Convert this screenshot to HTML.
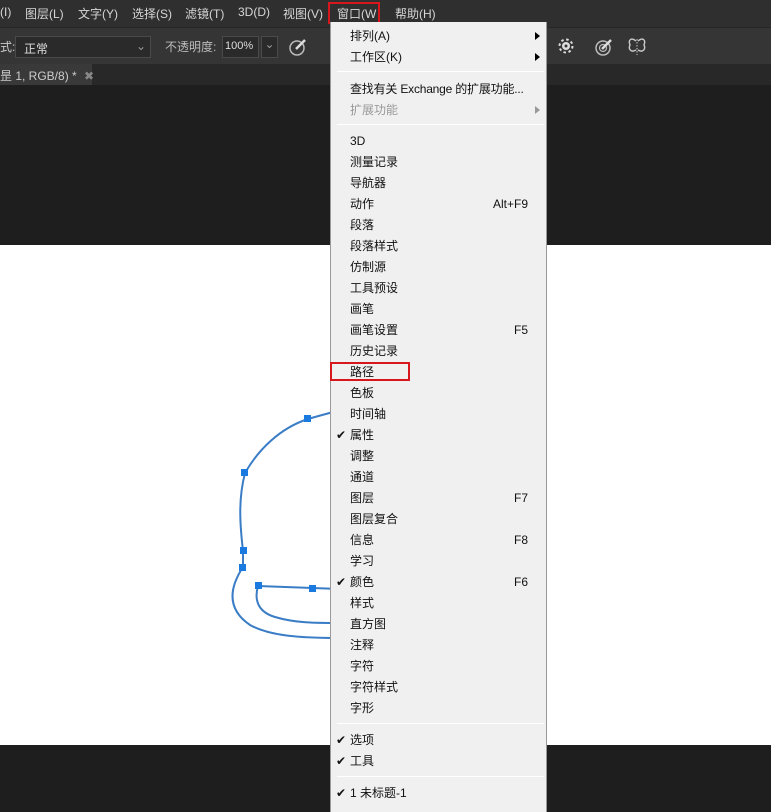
<!DOCTYPE html>
<html><head><meta charset="utf-8"><style>
*{margin:0;padding:0;box-sizing:border-box}
body{width:771px;height:806px;overflow:hidden;background:#1e1e1e;font-family:"Liberation Sans","Noto Sans CJK SC",sans-serif;font-size:12px;position:relative}
.a{position:absolute;white-space:nowrap}
.mb{left:0;top:0;width:771px;height:27px;background:#2f2f2f}
.mb span{position:absolute;top:5px;color:#d6d6d6;font-size:12px}
.tb{left:0;top:27px;width:771px;height:37px;background:#353535;border-top:1px solid #262626}
.tr{left:0;top:64px;width:771px;height:21px;background:#282828}
.menu{left:330px;top:22px;width:217px;height:790px;background:#f0f0f0;border-left:1px solid #999;border-right:1px solid #999}
.it{position:absolute;left:19px;height:21px;line-height:21px;color:#111;font-size:12px}
.sc{position:absolute;right:18px;height:21px;line-height:21px;color:#111;font-size:12px}
.ck{position:absolute;left:5px;height:21px;line-height:21px;color:#111;font-size:12px}
.sep{position:absolute;left:6px;right:2px;height:1px;background:#c8c8c8;border-bottom:1px solid #fff}
.ar{position:absolute;right:6px;width:0;height:0;border-top:4px solid transparent;border-bottom:4px solid transparent;border-left:5px solid #000}
</style></head><body>
<div class="a mb">
<span style="left:0">(I)</span><span style="left:25px">图层(L)</span><span style="left:78px">文字(Y)</span><span style="left:132px">选择(S)</span><span style="left:185px">滤镜(T)</span><span style="left:238px">3D(D)</span><span style="left:283px">视图(V)</span>
<span style="left:337px">窗口(W</span><span style="left:395px">帮助(H)</span>
</div>
<div class="a" style="left:328px;top:2px;width:52px;height:22px;border:2px solid #d7161e"></div>
<div class="a tb"></div>
<div class="a" style="left:0;top:38px;color:#ccc">式:</div>
<div class="a" style="left:15px;top:36px;width:136px;height:22px;background:#2a2a2a;border:1px solid #4a4a4a;color:#ddd;padding:3px 8px">正常<span style="position:absolute;right:4px;top:2px;color:#999">⌄</span></div>
<div class="a" style="left:165px;top:38px;color:#bbb">不透明度:</div>
<div class="a" style="left:222px;top:36px;width:37px;height:22px;background:#2a2a2a;border:1px solid #4a4a4a;color:#ddd;padding:3px 2px;font-size:11px">100%</div>
<div class="a" style="left:261px;top:36px;width:17px;height:22px;background:#2a2a2a;border:1px solid #4a4a4a;color:#999;text-align:center">⌄</div>
<svg class="a" style="left:288px;top:37px" width="20" height="20"><circle cx="9" cy="11" r="7" fill="none" stroke="#bbb" stroke-width="1.5"/><path d="M8 12 L17 3" stroke="#ddd" stroke-width="2.5"/></svg>
<svg class="a" style="left:558px;top:38px" width="18" height="18"><circle cx="8" cy="8" r="4" fill="#ddd"/><circle cx="8" cy="8" r="6.5" fill="none" stroke="#ddd" stroke-width="2" stroke-dasharray="2.5 2.6"/><circle cx="8" cy="8" r="1.5" fill="#353535"/></svg>
<svg class="a" style="left:594px;top:37px" width="20" height="20"><circle cx="9" cy="11" r="7" fill="none" stroke="#bbb" stroke-width="1.5"/><circle cx="9" cy="11" r="3.5" fill="none" stroke="#bbb" stroke-width="1.2"/><path d="M8 12 L17 3" stroke="#ddd" stroke-width="2.5"/></svg>
<svg class="a" style="left:627px;top:37px" width="20" height="20"><path d="M9 4 C4 0 1 3 3 8 C1 12 4 16 9 13 M11 4 C16 0 19 3 17 8 C19 12 16 16 11 13" fill="none" stroke="#ccc" stroke-width="1.4"/><path d="M10 2 V18" stroke="#ccc" stroke-dasharray="1.5 1.5"/></svg>
<div class="a tr"></div>
<div class="a" style="left:0;top:64px;width:92px;height:21px;background:#393939;color:#ccc;padding:3px 0 0 0">昰 1, RGB/8) * <span style="color:#888;margin-left:4px">✖</span></div>
<div class="a" style="left:0;top:245px;width:771px;height:500px;background:#fff"></div>
<svg class="a" style="left:0;top:0" width="771" height="806">
<g fill="none" stroke="#3a7dc6" stroke-width="2">
<path d="M340 410 C330 413 318 416 308 419 C280 428 258 450 245 473 C238 500 240 525 243 551 L243 567 C228 590 228 610 250 625 C270 636 300 638 340 638"/>
<path d="M258 586 L340 589"/>
<path d="M258 586 C254 600 258 612 275 617 C295 623 315 623 340 623"/>
</g>
<g fill="#1a7ae0"><rect x="304" y="415" width="7" height="7"/><rect x="241" y="469" width="7" height="7"/><rect x="240" y="547" width="7" height="7"/><rect x="239" y="564" width="7" height="7"/><rect x="255" y="582" width="7" height="7"/><rect x="309" y="585" width="7" height="7"/></g>
</svg>
<div class="a menu">
<div class="it" style="top:4px">排列(A)</div><div class="ar" style="top:10px"></div>
<div class="it" style="top:25px">工作区(K)</div><div class="ar" style="top:31px"></div>
<div class="sep" style="top:49px"></div>
<div class="it" style="top:57px;letter-spacing:-0.2px">查找有关 Exchange 的扩展功能...</div>
<div class="it" style="top:78px;color:#999">扩展功能</div><div class="ar" style="top:84px;border-left-color:#999"></div>
<div class="sep" style="top:102px"></div>
<div class="it" style="top:109px">3D</div>
<div class="it" style="top:130px">测量记录</div>
<div class="it" style="top:151px">导航器</div>
<div class="it" style="top:172px">动作</div><div class="sc" style="top:172px">Alt+F9</div>
<div class="it" style="top:193px">段落</div>
<div class="it" style="top:214px">段落样式</div>
<div class="it" style="top:235px">仿制源</div>
<div class="it" style="top:256px">工具预设</div>
<div class="it" style="top:277px">画笔</div>
<div class="it" style="top:298px">画笔设置</div><div class="sc" style="top:298px">F5</div>
<div class="it" style="top:319px">历史记录</div>
<div class="it" style="top:340px">路径</div>
<div class="it" style="top:361px">色板</div>
<div class="it" style="top:382px">时间轴</div>
<div class="ck" style="top:403px">✔</div><div class="it" style="top:403px">属性</div>
<div class="it" style="top:424px">调整</div>
<div class="it" style="top:445px">通道</div>
<div class="it" style="top:466px">图层</div><div class="sc" style="top:466px">F7</div>
<div class="it" style="top:487px">图层复合</div>
<div class="it" style="top:508px">信息</div><div class="sc" style="top:508px">F8</div>
<div class="it" style="top:529px">学习</div>
<div class="ck" style="top:550px">✔</div><div class="it" style="top:550px">颜色</div><div class="sc" style="top:550px">F6</div>
<div class="it" style="top:571px">样式</div>
<div class="it" style="top:592px">直方图</div>
<div class="it" style="top:613px">注释</div>
<div class="it" style="top:634px">字符</div>
<div class="it" style="top:655px">字符样式</div>
<div class="it" style="top:676px">字形</div>
<div class="sep" style="top:701px"></div>
<div class="ck" style="top:708px">✔</div><div class="it" style="top:708px">选项</div>
<div class="ck" style="top:729px">✔</div><div class="it" style="top:729px">工具</div>
<div class="sep" style="top:754px"></div>
<div class="ck" style="top:761px">✔</div><div class="it" style="top:761px">1 未标题-1</div>
</div>
<div class="a" style="left:330px;top:362px;width:80px;height:19px;border:2px solid #d7161e"></div>
</body></html>
